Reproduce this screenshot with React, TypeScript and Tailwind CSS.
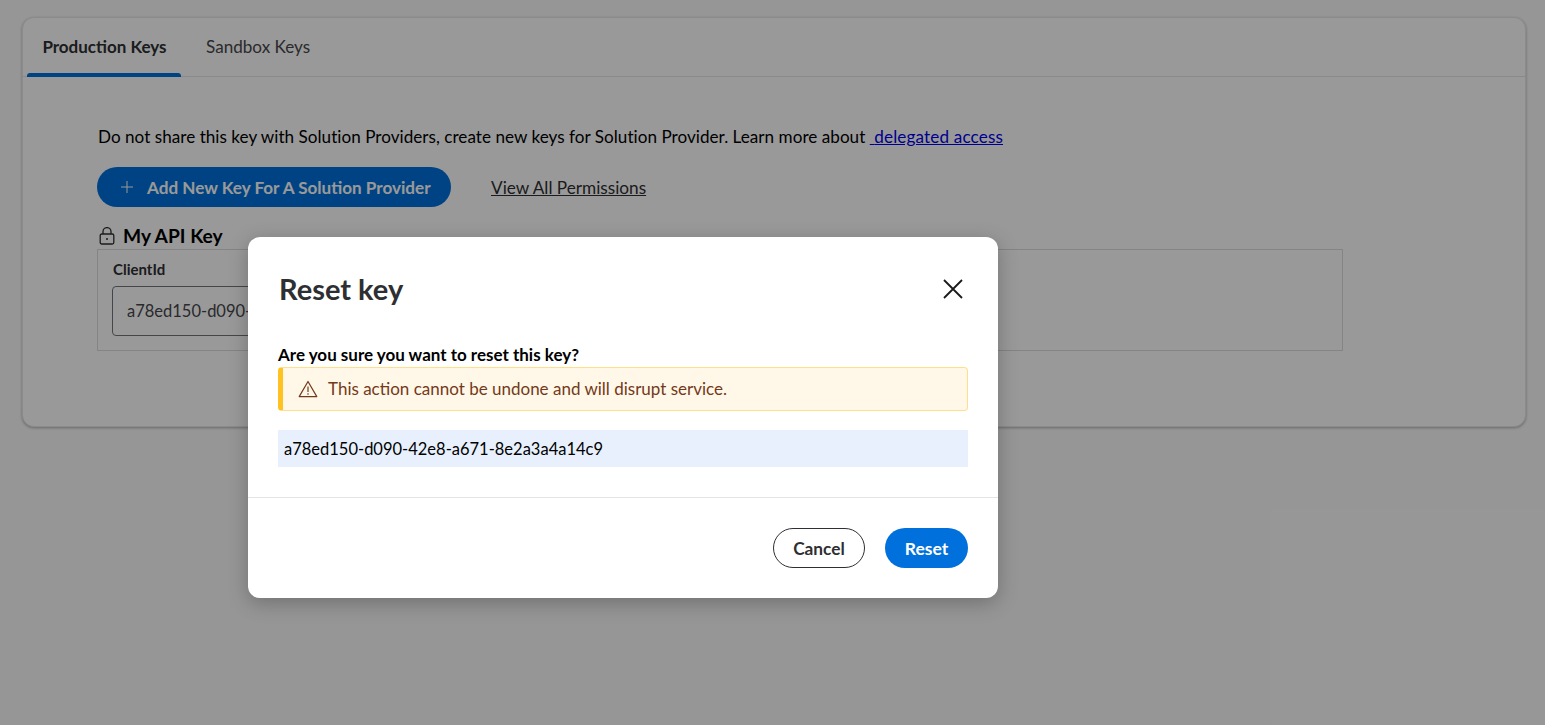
import React from "react";

const font = { fontFamily: '"Lato", "Noto Sans", sans-serif' };

export default function App() {
  return (
    <div className="relative h-[725px] w-full overflow-hidden bg-[#fbfbfb] pt-[17px] pl-[22px] pr-[19px] text-black [font-family:Lato,sans-serif]">
      <div className="h-[410px] rounded-[12px] bg-white border border-[#e8e8e8] shadow-[0_1px_3px_rgba(0,0,0,0.3)]">
        <div className="flex h-[59px] border-b border-[#e3e4e5] pl-[4px]">
          <div className="relative flex w-[154px] items-start justify-center pl-[1px] pt-[17px] text-[17px] font-bold leading-[24px] text-[#2e2f32]">
            Production Keys
            <div className="absolute bottom-[-1px] left-0 right-0 h-[4px] rounded-t-[3px] bg-[#0071dc]" />
          </div>
          <div className="ml-[25px] pt-[17px] text-[17.1px] leading-[24px] text-[#46474a]">Sandbox Keys</div>
        </div>
        <div className="pl-[74px] pr-[182px] pt-[48px]">
          <p className="pl-px text-[17.1px] leading-[24px] tracking-[0.03px] text-black">
            Do not share this key with Solution Providers, create new keys for Solution Provider. Learn more about{" "}
            <a className="tracking-[0.15px] text-[#0000ee] underline">{"\u00a0"}delegated access</a>
          </p>
          <div className="mt-[18px] flex items-center">
            <button className="flex h-[40px] w-[354px] items-center rounded-full bg-[#0071dc] pl-[23px] pt-[2px] text-[17.1px] font-bold text-white">
              <svg width="14" height="14" viewBox="0 0 14 14" className="mb-[2px] mr-[13px]" fill="none" stroke="currentColor" strokeWidth="1">
                <path d="M7 1v12M1 7h12" />
              </svg>
              Add New Key For A Solution Provider
            </button>
            <a className="ml-[40px] pt-[2px] text-[17.2px] text-[#2e2f32] underline">View All Permissions</a>
          </div>
          <div className="mt-[16px] flex h-[26px] items-center pl-[2px] text-[19.2px] font-bold leading-[26px] text-black">
            <svg width="16" height="18" viewBox="0 0 16 18" fill="none" stroke="#2e2f32" strokeWidth="1.3" className="mr-[8px]">
              <rect x="1.2" y="7" width="13.6" height="10" rx="1.5" />
              <path d="M4 7V4.6a4 4 0 0 1 8 0V7" />
              <circle cx="8" cy="12" r="1" fill="#2e2f32" stroke="none" />
            </svg>
            <span className="-mt-[1px]">My API Key</span>
          </div>
          <div className="h-[102px] border border-[#dcdcdc] px-[14px] pt-[10px]">
            <div className="pl-px text-[15px] font-bold leading-[18px] text-[#2e2f32]">ClientId</div>
            <div className="mt-[8px] flex h-[50px] w-[400px] items-center rounded-[4px] border border-[#74767c] pl-[14px] text-[16.5px] text-[#46474a]">
              a78ed150-d090-42e8-a671-8e2a3a4a14c9
            </div>
          </div>
        </div>
      </div>

      <div className="absolute inset-0 bg-black/40" />

      <div className="absolute left-[248px] top-[237px] h-[361px] w-[750px] rounded-[12px] bg-white shadow-[0_5px_20px_rgba(0,0,0,0.25)]" style={font}>
        <div className="flex h-[106px] items-start justify-between pl-[31px] pr-[33px] pt-[32px]">
          <h2 className="text-[29px] font-bold leading-[40px] text-[#2e2f32]">Reset key</h2>
          <svg width="24" height="24" viewBox="0 0 24 24" className="mt-[8px]" fill="none" stroke="#1a1a1a" strokeWidth="1.8">
            <path d="M3 3l18 18M21 3L3 21" />
          </svg>
        </div>
        <div className="px-[30px]">
          <div className="text-[17px] font-bold leading-[24px] text-black">Are you sure you want to reset this key?</div>
          <div className="flex h-[44px] items-center rounded-[4px] border border-[#ffe08a] border-l-[5px] border-l-[#ffc220] bg-[#fff8e8] pl-[15px] text-[17px] text-[#74391a]">
            <svg width="20" height="18" viewBox="0 0 20 18" fill="none" stroke="#74391a" strokeWidth="1.2" className="mr-[10px]">
              <path d="M10 1.5L18.8 16.6H1.2z" strokeLinejoin="round" />
              <path d="M10 6.5v5.5" />
              <circle cx="10" cy="14" r="0.8" fill="#74391a" stroke="none" />
            </svg>
            This action cannot be undone and will disrupt service.
          </div>
          <div className="mt-[19px] flex h-[37px] items-center bg-[#e8f0fe] pl-[6px] pt-[2px] text-[16.5px] text-black">
            a78ed150-d090-42e8-a671-8e2a3a4a14c9
          </div>
        </div>
        <div className="mt-[30px] flex h-[101px] items-start justify-end gap-[20px] border-t border-[#e3e4e5] pr-[30px] pt-[30px]">
          <button className="flex h-[40px] w-[92px] items-center justify-center rounded-full border border-[#2e2f32] bg-white pt-[2px] text-[17.3px] font-bold text-[#2e2f32]">Cancel</button>
          <button className="flex h-[40px] w-[83px] items-center justify-center rounded-full bg-[#0071dc] pt-[2px] text-[17.5px] font-bold text-white">Reset</button>
        </div>
      </div>
    </div>
  );
}
